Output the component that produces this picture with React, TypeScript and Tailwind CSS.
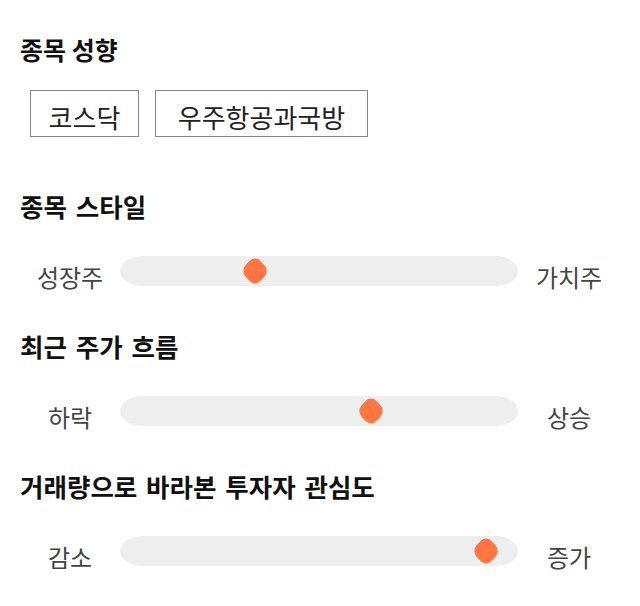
import React from 'react';

type SliderRow = {
  title: string;
  left: string;
  right: string;
  value: number;
};

const rows: SliderRow[] = [
  { title: '종목 스타일', left: '성장주', right: '가치주', value: 34 },
  { title: '최근 주가 흐름', left: '하락', right: '상승', value: 63 },
  { title: '거래량으로 바라본 투자자 관심도', left: '감소', right: '증가', value: 92 },
];

function Thumb({ value }: { value: number }) {
  return (
    <div
      className="absolute top-1/2 -translate-x-1/2 -translate-y-1/2"
      style={{ left: `${value}%` }}
    >
      <svg width="28" height="30" viewBox="0 0 28 30">
        <rect
          x="3"
          y="4"
          width="22"
          height="22"
          rx="8"
          fill="#ff7642"
          transform="translate(14 15) scale(0.95 1.02) rotate(45) translate(-14 -15)"
        />
      </svg>
    </div>
  );
}

function Section({ row }: { row: SliderRow }) {
  return (
    <section>
      <h2 className="text-[25.5px] font-bold leading-[30px] text-[#111] [word-spacing:3px]">{row.title}</h2>
      <div className="mt-[35px] flex items-start">
        <span className="relative top-[6px] w-[100px] text-center text-[24px] leading-[30px] text-[#444]">
          {row.left}
        </span>
        <div className="relative h-[30px] w-[398px] rounded-[22px/15px] bg-[#eeeeee]">
          <Thumb value={row.value} />
        </div>
        <span className="relative top-[6px] w-[102px] text-center text-[24px] leading-[30px] text-[#444]">
          {row.right}
        </span>
      </div>
    </section>
  );
}

function App() {
  return (
    <div
      className="h-[606px] w-[640px] bg-white px-5 pt-[34px]"
      style={{ fontFamily: '"Noto Sans CJK KR", "Noto Sans", sans-serif' }}
    >
      <h2 className="text-[25px] font-bold leading-[30px] text-[#111]">종목 성향</h2>
      <div className="mt-[26px] flex gap-4 pl-[10px]">
        <button
          type="button"
          className="flex h-[47px] w-[109px] items-center justify-center border border-[#888] pt-[6px] text-[26px] text-[#222]"
        >
          코스닥
        </button>
        <button
          type="button"
          className="flex h-[47px] w-[213px] items-center justify-center border border-[#888] pt-[6px] text-[26px] text-[#222]"
        >
          우주항공과국방
        </button>
      </div>
      <div className="mt-[54px] flex flex-col gap-[45px]">
        {rows.map((row) => (
          <Section key={row.title} row={row} />
        ))}
      </div>
    </div>
  );
}

export default App;
